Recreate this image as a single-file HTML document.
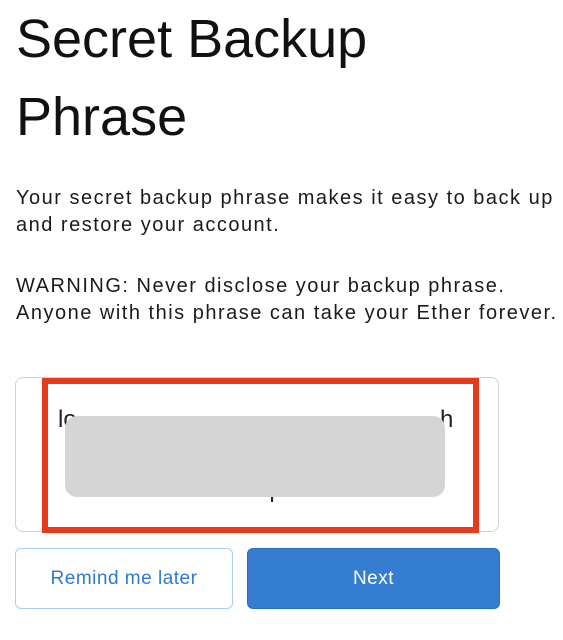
<!DOCTYPE html>
<html><head><meta charset="utf-8"><style>
body{margin:0;width:563px;height:640px;background:#fff;font-family:"Liberation Sans",sans-serif;color:#111;position:relative;overflow:hidden}
.t{position:absolute;left:16px;font-size:54px;line-height:1;white-space:nowrap}
.p{position:absolute;left:16px;font-size:20px;letter-spacing:1.5px;line-height:1;white-space:nowrap;color:#1b1b1b}
.box{position:absolute;left:15px;top:377px;width:484px;height:155px;border:1px solid #d0d0d0;border-radius:8px;box-sizing:border-box}
.red{position:absolute;left:42px;top:378px;width:437px;height:155px;border:6px solid #e8391e;box-sizing:border-box}
.gray{position:absolute;left:65px;top:416px;width:380px;height:81px;background:#d5d5d5;border-radius:12px}
.btn{position:absolute;top:548px;height:61px;border-radius:6px;box-sizing:border-box;font-size:19px;letter-spacing:0.5px;display:flex;align-items:center;justify-content:center}
</style></head><body>
<div class="t" style="top:12px">Secret Backup</div>
<div class="t" style="top:90px">Phrase</div>
<div class="p" style="top:188px">Your secret backup phrase makes it easy to back up</div>
<div class="p" style="top:215px">and restore your account.</div>
<div class="p" style="top:276px">WARNING: Never disclose your backup phrase.</div>
<div class="p" style="top:303px">Anyone with this phrase can take your Ether forever.</div>
<div class="box"></div>
<div class="p" style="top:408px;left:58px;font-size:24px;letter-spacing:0;color:#222">lo</div>
<div class="p" style="top:408px;left:440px;font-size:24px;letter-spacing:0;color:#222">h</div>
<div class="p" style="top:478px;left:180px;font-size:24px;letter-spacing:0;color:#222">indicate post</div>
<div class="red"></div>
<div class="gray"></div>
<div class="btn" style="left:15px;width:218px;border:1px solid #a9cff2;color:#2f7ad0;background:#fff">Remind me later</div>
<div class="btn" style="left:247px;width:253px;background:#347dd0;border:1px solid #2a6fc0;color:#fff">Next</div>
</body></html>
